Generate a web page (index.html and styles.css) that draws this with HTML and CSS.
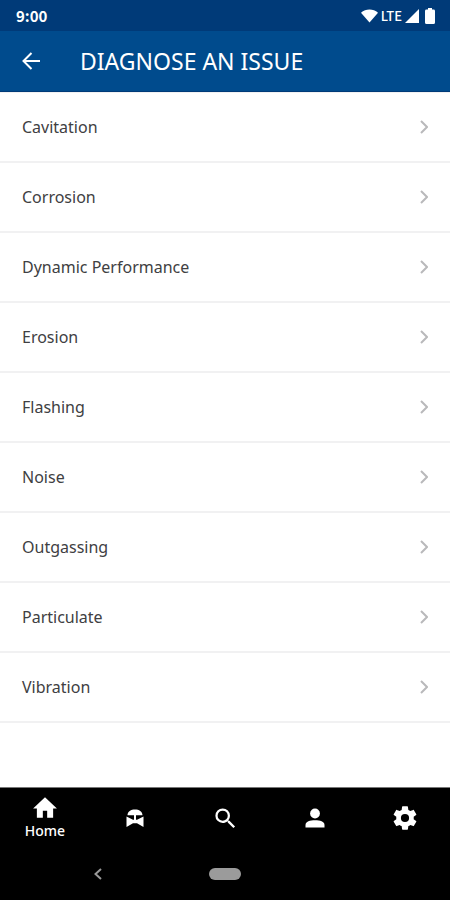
FILE: index.html
```html
<!DOCTYPE html>
<html lang="en">
<head>
<meta charset="utf-8">
<meta name="viewport" content="width=device-width, initial-scale=1">
<title>Diagnose an Issue</title>
<link rel="stylesheet" href="styles.css">
</head>
<body>
<div class="status-bar">
  <span class="clock">9:00</span>
  <div class="status-icons">
    <svg width="17" height="14" viewBox="0 0 18 14" aria-hidden="true"><path d="M0 3.600C5 -.9 13 -.9 18 3.600L9 14z"/></svg>
    <span class="network">LTE</span>
    <svg width="14" height="14" viewBox="0 0 14 14" aria-hidden="true"><path d="M14 0v14H0z"/></svg>
    <svg class="battery" width="10" height="16" viewBox="0 0 10 16" aria-hidden="true"><path d="M3 0h4v1.600h1.500Q10 1.600 10 3v11.500Q10 16 8.500 16h-7Q0 16 0 14.500V3Q0 1.600 1.500 1.600H3z"/></svg>
  </div>
</div>
<header class="app-bar">
  <button class="back" type="button" aria-label="Back">
    <svg width="18" height="18" viewBox="0 0 18 18" aria-hidden="true"><path d="M18 9H1.500M9.500 1L1.500 9l8 8"/></svg>
  </button>
  <h1>DIAGNOSE AN ISSUE</h1>
</header>
<main>
  <ul class="issues">
    <li><a href="#cavitation">Cavitation<svg class="chevron" width="8" height="14" viewBox="0 0 8 14" aria-hidden="true"><path d="M1 1l6 6-6 6"/></svg></a></li>
    <li><a href="#corrosion">Corrosion<svg class="chevron" width="8" height="14" viewBox="0 0 8 14" aria-hidden="true"><path d="M1 1l6 6-6 6"/></svg></a></li>
    <li><a href="#dynamic-performance">Dynamic Performance<svg class="chevron" width="8" height="14" viewBox="0 0 8 14" aria-hidden="true"><path d="M1 1l6 6-6 6"/></svg></a></li>
    <li><a href="#erosion">Erosion<svg class="chevron" width="8" height="14" viewBox="0 0 8 14" aria-hidden="true"><path d="M1 1l6 6-6 6"/></svg></a></li>
    <li><a href="#flashing">Flashing<svg class="chevron" width="8" height="14" viewBox="0 0 8 14" aria-hidden="true"><path d="M1 1l6 6-6 6"/></svg></a></li>
    <li><a href="#noise">Noise<svg class="chevron" width="8" height="14" viewBox="0 0 8 14" aria-hidden="true"><path d="M1 1l6 6-6 6"/></svg></a></li>
    <li><a href="#outgassing">Outgassing<svg class="chevron" width="8" height="14" viewBox="0 0 8 14" aria-hidden="true"><path d="M1 1l6 6-6 6"/></svg></a></li>
    <li><a href="#particulate">Particulate<svg class="chevron" width="8" height="14" viewBox="0 0 8 14" aria-hidden="true"><path d="M1 1l6 6-6 6"/></svg></a></li>
    <li><a href="#vibration">Vibration<svg class="chevron" width="8" height="14" viewBox="0 0 8 14" aria-hidden="true"><path d="M1 1l6 6-6 6"/></svg></a></li>
  </ul>
</main>
<footer>
  <nav class="tabs">
    <a href="#home" aria-current="page">
      <svg width="26" height="26" viewBox="0 0 24 24" aria-hidden="true"><path d="M10 21v-6.500h4V21h5.500v-8.500H23L12 2 1 12.500h3.500V21z"/></svg>
      Home
    </a>
    <a href="#valves" aria-label="Valves">
      <svg width="18" height="18" viewBox="0 0 18 18" aria-hidden="true"><path d="M1.500 6.300C1.500 2.500 5 .5 9 .5s7.500 2 7.500 5.800zM8 6h2v5H8zM.5 7.500L7 10.800h4l6.500-3.300V18L11 14.200H7L.5 18z"/></svg>
    </a>
    <a href="#search" aria-label="Search">
      <svg width="27" height="27" viewBox="0 0 24 24" aria-hidden="true"><path d="M15.500 14h-.79l-.28-.27A6.470 6.470 0 0 0 16 9.500 6.500 6.500 0 1 0 9.500 16c1.610 0 3.090-.59 4.230-1.570l.27.28v.79l5 4.990L20.490 19zm-6 0A4.500 4.500 0 1 1 9.500 5a4.500 4.500 0 0 1 0 9z"/></svg>
    </a>
    <a href="#profile" aria-label="Profile">
      <svg width="20" height="20" viewBox="0 0 20 20" aria-hidden="true"><circle cx="10" cy="5.500" r="4.900"/><path d="M.5 19.500V17C.5 13.500 5 12.200 10 12.200s9.500 1.300 9.500 4.800v2.500z"/></svg>
    </a>
    <a href="#settings" aria-label="Settings">
      <svg width="28" height="28" viewBox="0 0 24 24" aria-hidden="true"><path d="M19.430 12.980c.04-.32.07-.64.07-.98s-.03-.66-.07-.98l2.110-1.650c.19-.15.24-.42.12-.64l-2-3.460c-.12-.22-.39-.3-.61-.22l-2.490 1c-.52-.4-1.080-.73-1.690-.98l-.38-2.650C14.460 2.180 14.250 2 14 2h-4c-.25 0-.46.18-.49.42l-.38 2.650c-.61.25-1.170.59-1.690.98l-2.490-1c-.23-.09-.49 0-.61.22l-2 3.460c-.13.22-.07.49.12.64l2.110 1.650c-.04.32-.07.65-.07.98s.03.66.07.98l-2.110 1.650c-.19.15-.24.42-.12.64l2 3.460c.12.22.39.3.61.22l2.490-1c.52.4 1.080.73 1.690.98l.38 2.650c.03.24.24.42.49.42h4c.25 0 .46-.18.49-.42l.38-2.650c.61-.25 1.170-.59 1.690-.98l2.490 1c.23.09.49 0 .61-.22l2-3.460c.12-.22.07-.49-.12-.64zM12 15.500a3.500 3.500 0 1 1 0-7 3.500 3.500 0 0 1 0 7z"/></svg>
    </a>
  </nav>
  <div class="system-nav">
    <button class="system-back" type="button" aria-label="System back">
      <svg width="8" height="12" viewBox="0 0 8 12" aria-hidden="true"><path d="M7 1L1.500 6 7 11"/></svg>
    </button>
    <button class="system-home" type="button" aria-label="System home"></button>
  </div>
</footer>
</body>
</html>
```
FILE: styles.css
```css
* {
  box-sizing: border-box;
}

body {
  margin: 0;
  min-height: 100vh;
  display: flex;
  flex-direction: column;
  background: #fff;
  color: #404042;
  font-family: "Noto Sans", "Open Sans", sans-serif;
  font-size: 16px;
}

svg {
  display: block;
  fill: currentColor;
}

button {
  padding: 0;
  border: 0;
  background: none;
  color: inherit;
}

a {
  color: inherit;
  text-decoration: none;
}

.status-bar {
  height: 31px;
  padding: 0 15px 0 16px;
  display: flex;
  align-items: center;
  justify-content: space-between;
  background: #003a78;
  color: #fff;
}

.clock {
  font-family: "Noto Sans CJK JP", sans-serif;
  font-size: 15px;
  font-weight: 700;
  line-height: 20px;
}

.status-icons {
  display: flex;
  align-items: center;
  gap: 3px;
}

.network {
  font-family: "Noto Sans CJK JP", sans-serif;
  font-size: 13px;
  font-weight: 500;
  line-height: 20px;
}

.battery {
  margin-left: 3px;
}

.app-bar {
  height: 61px;
  padding: 0 22px;
  display: flex;
  align-items: center;
  gap: 40px;
  background: #004b8d;
  border-bottom: 1px solid #003a78;
  color: #fff;
}

.back svg {
  fill: none;
  stroke: currentColor;
  stroke-width: 2;
}

h1 {
  margin: 0;
  font-size: 23px;
  font-weight: 400;
  line-height: 32px;
}

main {
  flex: 1;
  border-top: 1px solid #f1f1f2;
}

.issues {
  margin: 0;
  padding: 0;
  list-style: none;
}

.issues a {
  height: 70px;
  padding: 0 22px;
  display: flex;
  align-items: center;
  justify-content: space-between;
  border-bottom: 2px solid #f1f1f2;
}

.chevron {
  fill: none;
  stroke: #b9b9bb;
  stroke-width: 2;
}

footer {
  background: #000;
  border-top: 1px solid #777;
  color: #fff;
}

.tabs {
  height: 60px;
  display: grid;
  grid-template-columns: repeat(5, 1fr);
}

.tabs a {
  display: flex;
  flex-direction: column;
  align-items: center;
  justify-content: center;
  font-size: 14px;
  font-weight: 500;
  line-height: 20px;
}

.system-nav {
  height: 52px;
  padding: 0 82px;
  display: grid;
  grid-template-columns: 1fr auto 1fr;
  align-items: center;
}

.system-back {
  width: 32px;
  height: 32px;
  display: grid;
  place-items: center;
  color: #999;
}

.system-back svg {
  fill: none;
  stroke: currentColor;
  stroke-width: 2;
}

.system-home {
  width: 32px;
  height: 12px;
  border-radius: 6px;
  background: #9b9b9b;
}
```
